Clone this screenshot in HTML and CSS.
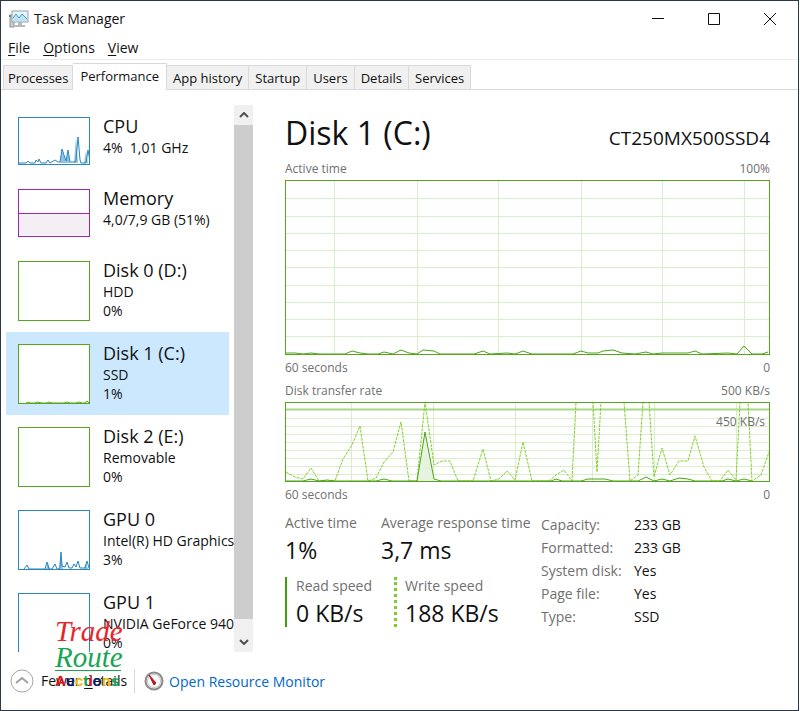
FILE: index.html
```html
<!DOCTYPE html>
<html lang="en">

<head>
  <meta charset="UTF-8">
  <meta name="viewport" content="width=device-width, initial-scale=1.0">
  <title>Task Manager</title>
  <link rel="stylesheet" href="styles.css">
</head>

<body>
  <div class="window">
    <header class="titlebar">
      <svg class="app-icon" width="20" height="18" viewBox="0 0 20 18">
        <rect x="1" y="5" width="4" height="12" fill="#c9cdd0" stroke="#8d9499" />
        <rect x="0" y="5" width="2" height="2" fill="#35b44a" />
        <rect x="3" y="1" width="16" height="11" fill="#e8f4fb" stroke="#9aa1a6" />
        <path d="M4 9l3-4 3 3 3-4 5 5v2H4z" fill="#bfe2f5" />
        <path d="M4 8l3-4 3 4 3-4 5 5" fill="none" stroke="#3a9bd0" />
        <path d="M9 12h4v3h3v2H6v-2h3z" fill="#b5babd" />
      </svg>
      <h1>Task Manager</h1>
      <div class="window-buttons">
        <button aria-label="Minimize"><svg width="12" height="12" viewBox="0 0 12 12"><path d="M0 5.500h12" /></svg></button>
        <button aria-label="Maximize"><svg width="12" height="12" viewBox="0 0 12 12"><path d="M.5.5h11v11H.5z" /></svg></button>
        <button aria-label="Close"><svg width="12" height="12" viewBox="0 0 12 12"><path d="M0 0l12 12M12 0L0 12" /></svg></button>
      </div>
    </header>

    <nav class="menu">
      <button><u>F</u>ile</button>
      <button><u>O</u>ptions</button>
      <button><u>V</u>iew</button>
    </nav>

    <nav class="tabs">
      <button>Processes</button>
      <button class="active">Performance</button>
      <button>App history</button>
      <button>Startup</button>
      <button>Users</button>
      <button>Details</button>
      <button>Services</button>
    </nav>

    <main class="content">
      <aside class="sidebar">
        <div class="list">
          <button class="item">
            <svg class="thumb thumb-small blue" viewBox="0 0 72 48">
              <rect x=".5" y=".5" width="71" height="47" />
              <path class="fill" d="M42 46l2-13 4 12 2-11 2 12zM56 46l2-26 2 26zM66 46l2-12 2 12z" />
              <path d="M1 46h7l2-2 2 2h5l1-3 2 2 1-3 2 4h5l2-3 2 3 5-3 3 2h2l2-13 4 12 2-11 2 12h5l1-2 2-23 2 23 1 3h5l2-13 2 11" />
            </svg>
            <span class="info"><b>CPU</b><span>4%&nbsp; 1,01 GHz</span></span>
          </button>
          <button class="item">
            <svg class="thumb thumb-small purple" viewBox="0 0 72 48">
              <rect x=".5" y=".5" width="71" height="47" />
              <path class="fill" d="M1 24.500h70v22H1z" />
              <path d="M1 24.500h70" />
            </svg>
            <span class="info"><b>Memory</b><span>4,0/7,9 GB (51%)</span></span>
          </button>
          <button class="item">
            <svg class="thumb green" viewBox="0 0 72 60"><rect x=".5" y=".5" width="71" height="59" /></svg>
            <span class="info"><b>Disk 0 (D:)</b><span>HDD</span><span>0%</span></span>
          </button>
          <button class="item selected">
            <svg class="thumb green" viewBox="0 0 72 60">
              <rect x=".5" y=".5" width="71" height="59" />
              <path d="M8 59l2-1 2 1h5l2-1 5 1h5l2-1 3 1h12l3-1 3 1h6l3-1 3 1h3l2-2 2 2" />
            </svg>
            <span class="info"><b>Disk 1 (C:)</b><span>SSD</span><span>1%</span></span>
          </button>
          <button class="item">
            <svg class="thumb green" viewBox="0 0 72 60"><rect x=".5" y=".5" width="71" height="59" /></svg>
            <span class="info"><b>Disk 2 (E:)</b><span>Removable</span><span>0%</span></span>
          </button>
          <button class="item">
            <svg class="thumb blue" viewBox="0 0 72 60">
              <rect x=".5" y=".5" width="71" height="59" />
              <path class="fill" d="M41 59l2-17 2 17zM28 59l2-6 2 6zM66 59l2-6 2 6z" />
              <path d="M6 59l3-4 2 4h16l2-7 2 7h3l3-5 2 5h2l1-2 1-15 1 14 3 1 2-5 2 6h3l2-4 2 3 2-6 2 7h5l2-7 2 7" />
            </svg>
            <span class="info"><b>GPU 0</b><span>Intel(R) HD Graphics</span><span>3%</span></span>
          </button>
          <button class="item">
            <svg class="thumb blue" viewBox="0 0 72 60"><rect x=".5" y=".5" width="71" height="59" /></svg>
            <span class="info"><b>GPU 1</b><span>NVIDIA GeForce 940</span><span>0%</span></span>
          </button>
        </div>
        <div class="scrollbar">
          <button aria-label="Scroll up"><svg width="10" height="6" viewBox="0 0 10 6"><path d="M1 5l4-4 4 4" /></svg></button>
          <div class="track"></div>
          <button aria-label="Scroll down"><svg width="10" height="6" viewBox="0 0 10 6"><path d="M1 1l4 4 4-4" /></svg></button>
        </div>
      </aside>

      <section class="details">
        <div class="heading">
          <h2>Disk 1 (C:)</h2>
          <span class="model">CT250MX500SSD4</span>
        </div>

        <div class="caption"><span>Active time</span><span>100%</span></div>
        <svg class="chart chart-active" viewBox="0 0 485 175" preserveAspectRatio="none">
          <path class="grid" d="M49.500 0v175M132.500 0v175M213.500 0v175M296.500 0v175M377.500 0v175M459.500 0v175" />
          <path class="grid" d="M0 18.500h485M0 36.500h485M0 53.500h485M0 70.500h485M0 87.500h485M0 105.500h485M0 122.500h485M0 139.500h485M0 156.500h485" />
          <polyline class="line" points="1,173 10,173 18,174 26,173 34,174 60,174 67,171 75,173 83,174 93,174 99,172 108,174 116,170 124,173 132,174 138,170 149,171 155,174 189,174 198,171 205,174 222,173 230,174 238,171 247,174 288,174 296,171 303,173 313,173 318,171 328,170 337,173 350,174 361,172 368,174 377,173 403,173 410,171 417,174 443,173 452,174 459,166 467,174 477,174 483,172" />
          <rect class="frame" x=".5" y=".5" width="484" height="174" />
        </svg>
        <div class="caption caption-bottom"><span>60 seconds</span><span>0</span></div>

        <div class="caption"><span>Disk transfer rate</span><span>500 KB/s</span></div>
        <div class="chart-box">
          <svg class="chart chart-transfer" viewBox="0 0 485 80" preserveAspectRatio="none">
            <path class="grid" d="M66.500 0v80M148.500 0v80M230.500 0v80M307.500 0v80M369.500 0v80M451.500 0v80" />
            <path class="grid" d="M0 16.500h485M0 24.500h485M0 32.500h485M0 40.500h485M0 48.500h485M0 56.500h485M0 64.500h485M0 72.500h485" />
            <path class="limit" d="M0 7.500h485" />
            <polygon class="area" points="132,79 140,30 149,79" />
            <polyline class="write" points="1,70 10,75 18,77 26,66 34,79 50,79 58,57 67,43 75,24 83,79 91,76 99,60 108,50 116,20 124,79 132,79 140,0 149,63 157,59 165,59 173,79 188,79 198,47 206,79 214,77 222,69 230,78 238,40 247,79 264,79 271,73 279,68 287,79 291,0 308,0 312,70 316,0 339,0 345,79 353,73 358,0 364,0 369,75 377,46 385,73 394,59 403,59 410,34 419,65 427,79 435,79 443,68 451,78 455,0 463,0 467,79 476,73 484,50" />
            <polyline class="line" points="1,79 18,79 26,77 34,79 42,78 50,79 91,79 99,77 107,79 132,79 140,30 149,77 156,79 266,79 271,77 277,79 296,79 303,77 320,77 328,79 353,79 361,75 369,79 377,77 385,79 394,76 403,77 410,79 437,79 443,77 451,79 459,77 467,79" />
            <rect class="frame" x=".5" y=".5" width="484" height="79" />
          </svg>
          <span class="limit-label">450 KB/s</span>
        </div>
        <div class="caption caption-bottom"><span>60 seconds</span><span>0</span></div>

        <div class="stats">
          <div class="numbers">
            <div class="stat"><span>Active time</span><strong>1%</strong></div>
            <div class="stat"><span>Average response time</span><strong>3,7 ms</strong></div>
            <div class="stat read"><span>Read speed</span><strong>0 KB/s</strong></div>
            <div class="stat write-speed"><span>Write speed</span><strong>188 KB/s</strong></div>
          </div>
          <table class="facts">
            <tr><th scope="row">Capacity:</th><td>233 GB</td></tr>
            <tr><th scope="row">Formatted:</th><td>233 GB</td></tr>
            <tr><th scope="row">System disk:</th><td>Yes</td></tr>
            <tr><th scope="row">Page file:</th><td>Yes</td></tr>
            <tr><th scope="row">Type:</th><td>SSD</td></tr>
          </table>
        </div>
      </section>
    </main>

    <footer class="footer">
      <button class="fewer">
        <svg width="24" height="24" viewBox="0 0 24 24">
          <circle cx="12" cy="12" r="11" fill="none" stroke="#a6a6a6" />
          <path d="M6 14l6-5 6 5" fill="none" stroke="#a0a0a0" stroke-width="2" />
        </svg>
        <span>Fewer <u>d</u>etails</span>
      </button>
      <a class="monitor" href="#">
        <svg width="20" height="20" viewBox="0 0 20 20">
          <circle cx="10" cy="10" r="8.500" fill="#f4f4f4" stroke="#8a8a8a" stroke-width="2" />
          <circle cx="10" cy="10" r="6.500" fill="#fff" stroke="#c4c4c4" />
          <path d="M5 4l7 8-2 2z" fill="#d01818" stroke="#b01010" />
        </svg>
        <span>Open Resource Monitor</span>
      </a>
      <!-- logo lies over the list and the footer -->
      <div class="logo">
        <span class="trade">Trade</span>
        <span class="route">Route</span>
        <span class="auctions"><i class="c1">A</i><i class="c2">u</i><i class="c3">c</i><i class="c4">t</i><i class="c1">i</i><i class="c2">o</i><i class="c3">n</i><i class="c4">s</i></span>
      </div>
    </footer>
  </div>
</body>

</html>
```

FILE: styles.css
```css
* {
  box-sizing: border-box;
}

body {
  margin: 0;
  font-family: "Open Sans", "Noto Sans", sans-serif;
  font-size: 14px;
  color: #111;
  background: #fff;
}

button {
  margin: 0;
  padding: 0;
  border: 0;
  background: none;
  font: inherit;
  color: inherit;
}

h1,
h2 {
  margin: 0;
  font-weight: 400;
}

svg {
  display: block;
  flex: none;
}

.window {
  display: flex;
  flex-direction: column;
  height: 100vh;
  margin-right: 1px;
  border: 1px solid #2b3947;
  overflow: hidden;
}

/* title bar */
.titlebar {
  display: flex;
  align-items: center;
  height: 35px;
  padding-left: 8px;
}

.titlebar h1 {
  flex: 1;
  margin-left: 5px;
  font-size: 14px;
}

.window-buttons {
  display: flex;
}

.window-buttons button {
  display: flex;
  align-items: center;
  justify-content: center;
  width: 56px;
  height: 35px;
}

.window-buttons path {
  fill: none;
  stroke: #111;
}

/* menu */
.menu {
  display: flex;
  gap: 13px;
  height: 24px;
  padding: 0 7px;
  border-bottom: 1px solid #ececec;
}

.menu u,
.fewer u {
  text-underline-offset: 2px;
}

/* tabs */
.tabs {
  display: flex;
  align-items: flex-end;
  height: 30px;
  padding-left: 2px;
  border-bottom: 1px solid #d9d9d9;
}

.tabs button {
  height: 24px;
  padding: 0 6px;
  border: 1px solid #d9d9d9;
  border-left-width: 0;
  border-bottom: 0;
  background: #f0f0f0;
  font-size: 13px;
}

.tabs button:first-child {
  padding: 0 4px;
  border-left-width: 1px;
}

.tabs .active {
  height: 27px;
  margin-bottom: -1px;
  padding: 0 7px 2px;
  background: #fff;
}

/* content */
.content {
  display: flex;
  flex: 1;
  min-height: 0;
  padding-top: 15px;
}

.sidebar {
  display: flex;
  flex: none;
  width: 252px;
  padding-left: 5px;
}

.list {
  flex: 1;
  min-width: 0;
  overflow: hidden;
}

.item {
  display: flex;
  gap: 13px;
  width: 223px;
  padding: 12px 12px 11px;
  text-align: left;
  white-space: nowrap;
}

.selected {
  background: #cce8ff;
}

.info {
  display: flex;
  flex-direction: column;
  line-height: 19px;
}

.info b {
  margin-bottom: 2px;
  font-size: 18px;
  font-weight: 400;
}

.thumb {
  width: 72px;
  height: 60px;
}

.thumb-small {
  height: 48px;
  margin-bottom: 1px;
}

.thumb rect {
  fill: #fff;
}

.thumb path {
  fill: none;
}

.blue {
  stroke: #2986bf;
}

.purple {
  stroke: #9b28b5;
}

.green {
  stroke: #57a51c;
}

.thumb .fill {
  fill: #8fc1e0;
  stroke: none;
}

.purple .fill {
  fill: #f4eff5;
}

.scrollbar {
  display: flex;
  flex-direction: column;
  width: 19px;
  background: #f0f0f0;
}

.scrollbar button {
  display: flex;
  align-items: center;
  justify-content: center;
  height: 20px;
}

.scrollbar path {
  fill: none;
  stroke: #505050;
  stroke-width: 2;
}

.track {
  flex: 1;
  margin-bottom: 13px;
  background: #cdcdcd;
}

.details {
  flex: 1;
  min-width: 0;
  padding: 0 28px 0 32px;
}

.heading {
  display: flex;
  align-items: baseline;
  justify-content: space-between;
  height: 54px;
}

.heading h2 {
  font-size: 32px;
  line-height: 56px;
}

.model {
  font-size: 19px;
}

.caption {
  display: flex;
  justify-content: space-between;
  height: 21px;
  font-size: 12px;
  line-height: 20px;
  color: #707070;
}

.caption-bottom {
  height: 26px;
  line-height: 26px;
}

.chart {
  width: 100%;
}

.chart-active {
  height: 175px;
}

.chart-transfer {
  height: 80px;
}

.frame {
  fill: none;
  stroke: #57a51c;
}

.grid {
  fill: none;
  stroke: #d9eecb;
}

.line {
  fill: none;
  stroke: #4ea319;
}

.limit {
  stroke: #a3d982;
  stroke-width: 2;
}

.area {
  fill: #e6f3de;
}

.write {
  fill: none;
  stroke: #82d02c;
  stroke-dasharray: 3 1;
}

.chart-box {
  position: relative;
}

.limit-label {
  position: absolute;
  top: 11px;
  right: 5px;
  font-size: 12px;
  color: #707070;
}

/* numbers under the charts */
.stats {
  display: flex;
  gap: 14px;
  padding-top: 5px;
}

.numbers {
  display: grid;
  grid-template-columns: 96px 146px;
  row-gap: 9px;
  align-content: start;
  padding-top: 1px;
}

.stat {
  display: flex;
  flex-direction: column;
  white-space: nowrap;
  line-height: 18px;
}

.stat span {
  color: #707070;
}

.stat strong {
  font-size: 23px;
  font-weight: 400;
  line-height: 36px;
}

.read {
  padding-left: 9px;
  border-left: 2px solid #3f9f12;
}

.write-speed {
  margin-left: 13px;
  padding-left: 8px;
  border-left: 3px dotted #7fcc28;
}

.read,
.write-speed {
  height: 50px;
}

.facts {
  align-self: flex-start;
  border-collapse: collapse;
  white-space: nowrap;
}

.facts th,
.facts td {
  padding: 0;
  line-height: 23px;
  font-weight: 400;
  text-align: left;
}

.facts th {
  width: 93px;
  color: #707070;
}

/* footer */
.footer {
  position: relative;
  display: flex;
  align-items: center;
  height: 58px;
  padding-left: 9px;
}

.fewer,
.monitor {
  display: flex;
  align-items: center;
  gap: 7px;
}

.fewer {
  padding-right: 7px;
  border-right: 1px solid #d9d9d9;
  line-height: 16px;
}

.monitor {
  gap: 5px;
  margin-left: 9px;
  color: #0066cc;
  text-decoration: none;
}

.logo {
  position: absolute;
  top: -34px;
  left: 54px;
  display: flex;
  flex-direction: column;
  width: 66px;
  font-family: "Liberation Serif", serif;
  font-size: 29px;
  font-style: italic;
  line-height: 26px;
}

.trade {
  color: #e8252d;
}

.route {
  color: #16a550;
  border-bottom: 1px solid #16a550;
}

.auctions {
  font-family: "Liberation Sans", sans-serif;
  font-size: 15px;
  font-weight: 700;
  line-height: 20px;
}

.auctions i {
  font-style: normal;
}

.c1 {
  color: #e81010;
}

.c2 {
  color: #10206e;
}

.c3 {
  color: #f2b807;
}

.c4 {
  color: #16a550;
}
```
